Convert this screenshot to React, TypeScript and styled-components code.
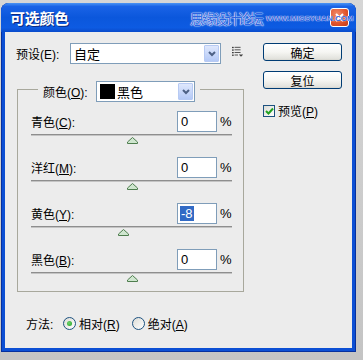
import React from "react";
import styled, { createGlobalStyle } from "styled-components";

const Global = createGlobalStyle`
  html, body { margin: 0; padding: 0; background: #c6c6c6; }
  body {
    font-family: "Liberation Sans", "Noto Sans CJK SC", sans-serif;
    font-size: 12px;
    color: #000;
  }
  * { box-sizing: border-box; }
`;

const Page = styled.div`
  width: 363px;
  height: 360px;
  padding: 3px 0 0 1px;
  background: linear-gradient(#d6d6d6, #c4c4c4);
`;

const Window = styled.div`
  width: 355px;
  height: 349px;
  display: flex;
  flex-direction: column;
  background: #0c4fd4;
  border-radius: 8px 8px 0 0;
  overflow: hidden;
  box-shadow: inset 1px 0 0 #06309e, inset -1px 0 0 #06309e, inset 0 -1px 0 #06309e;
`;

const TitleBar = styled.div`
  position: relative;
  height: 29px;
  flex: none;
  display: flex;
  align-items: center;
  padding: 0 7px 0 9px;
  background: linear-gradient(
    to bottom,
    #4b94f4 0%,
    #1a63e6 12%,
    #0b57dc 50%,
    #0d5be2 85%,
    #0a4bcb 100%
  );
`;

const Title = styled.div`
  flex: 1;
  color: #fff;
  font-family: "Noto Sans CJK SC", sans-serif;
  font-weight: 700;
  font-size: 15px;
  letter-spacing: -0.3px;
  text-shadow: 1px 1px 0 #0a2a80;
`;

const CloseButton = styled.div`
  width: 19px;
  height: 19px;
  border: 1px solid #fff;
  border-radius: 3px;
  background: radial-gradient(circle at 35% 30%, #f08a68 0%, #e2552d 55%, #c23a18 100%);
  display: flex;
  align-items: center;
  justify-content: center;
`;

const Watermark = styled.div`
  position: absolute;
  top: 5px;
  left: 189px;
  display: flex;
  align-items: center;
  gap: 4px;
  white-space: nowrap;
  pointer-events: none;
`;

const WatermarkCN = styled.span`
  font-family: "Noto Sans CJK SC", sans-serif;
  font-size: 14px;
  letter-spacing: -2px;
  color: #2d64e0;
  text-shadow: 0 0 1px #ffffff, 0 0 1px #ffffff, 0 0 2px #cfe0ff;
`;

const WatermarkEN = styled.span`
  font-family: "Liberation Sans", sans-serif;
  font-size: 8px;
  font-weight: 700;
  color: #2d64e0;
  text-shadow: 0 0 1px #ffffff, 0 0 1px #ffffff;
`;

const Client = styled.div`
  flex: 1;
  margin: 0 4px 4px;
  background: #ececec;
  display: flex;
  flex-direction: column;
  padding: 11px 0 0 11px;
`;

const Main = styled.div`
  display: flex;
`;

const LeftCol = styled.div`
  width: 228px;
  display: flex;
  flex-direction: column;
`;

const RightCol = styled.div`
  width: 79px;
  margin-left: 19px;
  display: flex;
  flex-direction: column;
`;

const PresetRow = styled.div`
  height: 21px;
  display: flex;
  align-items: center;
`;

const Label = styled.span<{ $w?: number }>`
  width: ${(p) => (p.$w ? `${p.$w}px` : "auto")};
  flex: ${(p) => (p.$w ? "none" : "1")};
  white-space: nowrap;
`;

const Key = styled.span`
  text-decoration: underline;
  text-underline-offset: 1px;
`;

const Combo = styled.div<{ $w: number }>`
  width: ${(p) => p.$w}px;
  height: 21px;
  flex: none;
  border: 1px solid #7f9db9;
  background: #fff;
  display: flex;
  align-items: center;
`;

const ComboText = styled.div`
  flex: 1;
  display: flex;
  align-items: center;
  padding-left: 3px;
  font-size: 13px;
  font-family: "Noto Sans CJK SC", sans-serif;
`;

const Swatch = styled.span`
  width: 15px;
  height: 15px;
  background: #000;
  margin-right: 2px;
`;

const ComboButton = styled.div`
  width: 15px;
  height: 17px;
  margin: 1px 1px 1px 0;
  border: 1px solid #b7caf3;
  border-radius: 1px;
  background: linear-gradient(#dfe8fd, #b4c9f6);
  display: flex;
  align-items: center;
  justify-content: center;
`;

const MenuIcon = styled.svg`
  margin-left: 11px;
  margin-top: -3px;
`;

const GroupBox = styled.div`
  width: 227px;
  margin: 25px 0 0 1px;
  border: 1px solid #a8a89c;
  padding: 0 11px 9px 13px;
  display: flex;
  flex-direction: column;
`;

const GroupHeader = styled.div`
  align-self: flex-start;
  margin: -9px 0 0 7px;
  padding: 0 5px;
  background: #ececec;
  display: flex;
  align-items: center;
`;

const Rows = styled.div`
  margin-top: 9px;
  display: flex;
  flex-direction: column;
  gap: 13px;
`;

const Row = styled.div`
  display: flex;
  flex-direction: column;
`;

const RowTop = styled.div`
  height: 21px;
  display: flex;
  align-items: center;
`;

const NumInput = styled.div`
  width: 40px;
  height: 21px;
  border: 1px solid #7f9db9;
  background: #fff;
  display: flex;
  align-items: center;
  padding-left: 2px;
  font-size: 13px;
`;

const Selected = styled.span<{ $sel: boolean }>`
  padding: 0 1px;
  line-height: 15px;
  background: ${(p) => (p.$sel ? "#316ac5" : "transparent")};
  color: ${(p) => (p.$sel ? "#fff" : "#000")};
`;

const Percent = styled.span`
  width: 12px;
  margin-left: 3px;
  font-size: 13px;
`;

const Track = styled.div`
  margin-top: 2px;
  height: 2px;
  background: #a2a2a2;
  border-bottom: 1px solid #c4c4c4;
  border-top: 1px solid #8e8e8e;
`;

const ThumbArea = styled.div`
  position: relative;
  margin-top: 1px;
  height: 7px;
`;

const Thumb = styled.svg`
  position: absolute;
  top: 0;
  margin-left: -5px;
`;

const MethodRow = styled.div`
  margin: 23px 0 0 10px;
  height: 16px;
  display: flex;
  align-items: center;
`;

const RadioItem = styled.div<{ $gap?: number }>`
  display: flex;
  align-items: center;
  margin-right: ${(p) => p.$gap ?? 0}px;
`;

const Radio = styled.span<{ $on: boolean }>`
  width: 13px;
  height: 13px;
  border-radius: 50%;
  border: 1px solid #1c5180;
  background: linear-gradient(135deg, #dcdcd6, #ffffff);
  margin-right: 3px;
  display: flex;
  align-items: center;
  justify-content: center;
  &::after {
    content: "";
    display: ${(p) => (p.$on ? "block" : "none")};
    width: 5px;
    height: 5px;
    border-radius: 50%;
    background: radial-gradient(circle at 40% 40%, #6fd36f, #21a121);
  }
`;

const Button = styled.div<{ $mt?: number }>`
  height: 18px;
  margin-top: ${(p) => p.$mt ?? 0}px;
  border: 1px solid #003c74;
  border-radius: 3px;
  background: linear-gradient(#ffffff 0%, #f6f6f3 50%, #e3e3de 90%, #d6d6d0 100%);
  display: flex;
  align-items: center;
  justify-content: center;
  font-family: "Noto Sans CJK SC", sans-serif;
  font-size: 12px;
`;

const CheckRow = styled.div`
  margin-top: 15px;
  display: flex;
  align-items: center;
  height: 13px;
`;

const CheckBox = styled.span`
  width: 12px;
  height: 12px;
  border: 1px solid #1c5180;
  background: linear-gradient(135deg, #dcdcd6, #ffffff);
  margin-right: 3px;
  display: flex;
  align-items: center;
  justify-content: center;
`;

const Chevron = () => (
  <svg width="8" height="6" viewBox="0 0 8 6">
    <path d="M1 1 L4 4 L7 1" fill="none" stroke="#4d6185" strokeWidth="2" />
  </svg>
);

const sliders = [
  { name: "青色", key: "C", value: 0 },
  { name: "洋红", key: "M", value: 0 },
  { name: "黄色", key: "Y", value: -8, selected: true },
  { name: "黑色", key: "B", value: 0 },
];

export default function App() {
  return (
    <Page>
      <Global />
      <Window>
        <TitleBar>
          <Title>可选颜色</Title>
          <CloseButton>
            <svg width="11" height="11" viewBox="0 0 11 11">
              <path d="M2 2 L9 9 M9 2 L2 9" stroke="#fff" strokeWidth="2" />
            </svg>
          </CloseButton>
          <Watermark>
            <WatermarkCN>思缘设计论坛</WatermarkCN>
            <WatermarkEN>WWW.MISSYUAN.COM</WatermarkEN>
          </Watermark>
        </TitleBar>
        <Client>
          <Main>
            <LeftCol>
              <PresetRow>
                <Label $w={54}>预设(E):</Label>
                <Combo $w={151}>
                  <ComboText>自定</ComboText>
                  <ComboButton>
                    <Chevron />
                  </ComboButton>
                </Combo>
                <MenuIcon width="14" height="12" viewBox="0 0 14 12">
                  <g fill="#3c3c3c">
                    <rect x="0" y="0" width="2" height="1.5" />
                    <rect x="3" y="0" width="7" height="1" />
                    <rect x="0" y="3" width="2" height="1.5" />
                    <rect x="3" y="3" width="7" height="1" />
                    <rect x="0" y="6" width="2" height="1.5" />
                    <rect x="3" y="6" width="7" height="1" />
                    <rect x="0" y="9" width="2" height="1.5" />
                    <rect x="3" y="9" width="4" height="1" />
                    <polygon points="8,9 13,9 10.5,11.5" />
                  </g>
                </MenuIcon>
              </PresetRow>
              <GroupBox>
                <GroupHeader>
                  <Label $w={53}>
                    颜色(<Key>O</Key>):
                  </Label>
                  <Combo $w={99}>
                    <ComboText>
                      <Swatch />
                      黑色
                    </ComboText>
                    <ComboButton>
                      <Chevron />
                    </ComboButton>
                  </Combo>
                </GroupHeader>
                <Rows>
                  {sliders.map((s) => (
                    <Row key={s.key}>
                      <RowTop>
                        <Label>
                          {s.name}(<Key>{s.key}</Key>):
                        </Label>
                        <NumInput>
                          <Selected $sel={!!s.selected}>{s.value}</Selected>
                        </NumInput>
                        <Percent>%</Percent>
                      </RowTop>
                      <Track />
                      <ThumbArea>
                        <Thumb
                          width="11"
                          height="7"
                          viewBox="0 0 11 7"
                          style={{ left: `calc(50% + ${(s.value / 100) * 50}%)` }}
                        >
                          <polygon
                            points="5.5,0.5 10.5,5 10.5,6.5 0.5,6.5 0.5,5"
                            fill="#cfe6cf"
                            stroke="#4e7d4e"
                            strokeWidth="1"
                          />
                        </Thumb>
                      </ThumbArea>
                    </Row>
                  ))}
                </Rows>
              </GroupBox>
            </LeftCol>
            <RightCol>
              <Button>确定</Button>
              <Button $mt={10}>复位</Button>
              <CheckRow>
                <CheckBox>
                  <svg width="9" height="8" viewBox="0 0 9 8">
                    <path d="M1 4 L3.5 6.5 L8 1.5" fill="none" stroke="#21a121" strokeWidth="2" />
                  </svg>
                </CheckBox>
                <span>
                  预览(<Key>P</Key>)
                </span>
              </CheckRow>
            </RightCol>
          </Main>
          <MethodRow>
            <Label $w={37}>方法:</Label>
            <RadioItem $gap={12}>
              <Radio $on />
              <span>
                相对(<Key>R</Key>)
              </span>
            </RadioItem>
            <RadioItem>
              <Radio $on={false} />
              <span>
                绝对(<Key>A</Key>)
              </span>
            </RadioItem>
          </MethodRow>
        </Client>
      </Window>
    </Page>
  );
}
